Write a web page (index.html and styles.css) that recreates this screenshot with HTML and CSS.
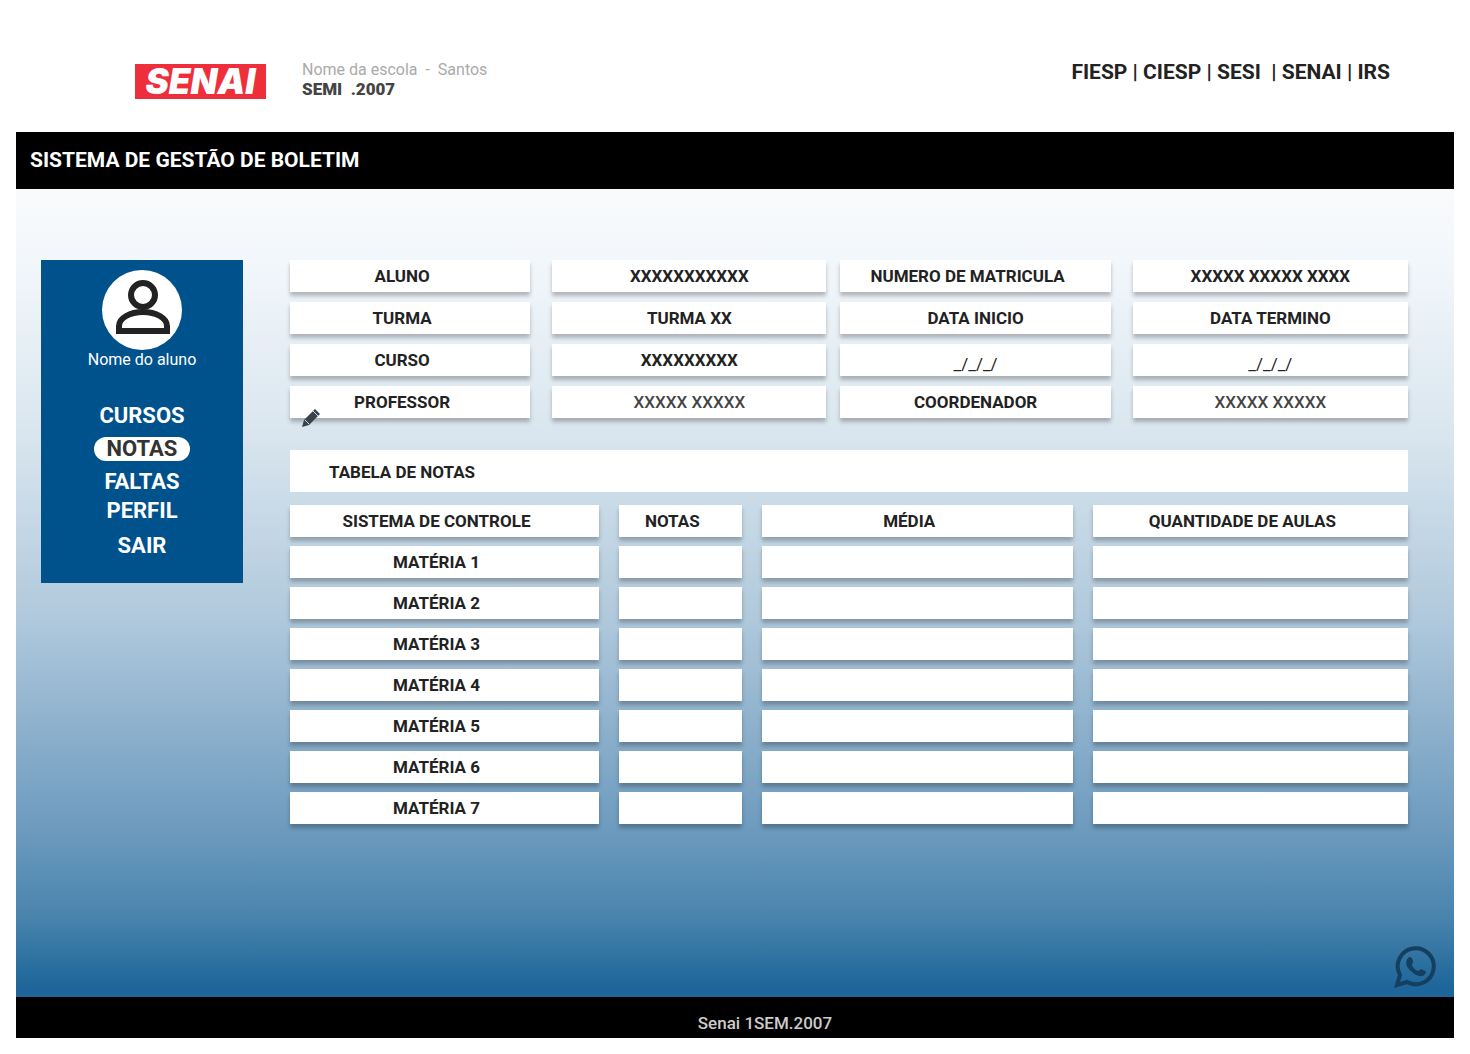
FILE: index.html
```html
<!DOCTYPE html>
<html lang="pt-BR">
<head>
<meta charset="utf-8">
<title>Sistema de Gestão de Boletim</title>
<link rel="stylesheet" href="styles.css">
</head>
<body>
<header class="top">
  <a class="logo" href="#">SENAI</a>
  <p class="school"><span>Nome da escola &nbsp;- &nbsp;Santos</span><strong>SEMI &nbsp;.2007</strong></p>
  <p class="partners">FIESP | CIESP | SESI &nbsp;| SENAI | IRS</p>
</header>
<div class="title-bar"><h1>SISTEMA DE GESTÃO DE BOLETIM</h1></div>
<main class="main">
  <aside class="sidebar">
    <svg class="avatar" viewBox="0 0 80 80" aria-hidden="true">
      <circle cx="40" cy="40" r="40" fill="#fff"/>
      <g fill="none" stroke="#222" stroke-width="6">
        <circle cx="41" cy="25" r="12"/>
        <path d="M17 61v-5c0-8 11-14 24-14s24 6 24 14v5z"/>
      </g>
    </svg>
    <p class="user">Nome do aluno</p>
    <nav class="menu">
      <a href="#">CURSOS</a>
      <a class="active" href="#">NOTAS</a>
      <a href="#">FALTAS</a>
      <a href="#">PERFIL</a>
      <a class="exit" href="#">SAIR</a>
    </nav>
  </aside>
  <section class="content">
    <div class="info">
      <div class="pair left">
        <div class="cell label">ALUNO</div><div class="cell">XXXXXXXXXXX</div>
        <div class="cell label">TURMA</div><div class="cell">TURMA XX</div>
        <div class="cell label">CURSO</div><div class="cell">XXXXXXXXX</div>
        <div class="cell label">PROFESSOR
          <svg class="pencil" viewBox="0 0 20 20" aria-hidden="true"><path d="M1 19l2-7L14 1l5 5L8 17z" fill="#39424a"/><path d="M4 12l4 4M12 3l5 5" stroke="#d5dde3" stroke-width="1"/></svg>
        </div><div class="cell light">XXXXX XXXXX</div>
      </div>
      <div class="pair right">
        <div class="cell label">NUMERO DE MATRICULA</div><div class="cell">XXXXX XXXXX XXXX</div>
        <div class="cell">DATA INICIO</div><div class="cell">DATA TERMINO</div>
        <div class="cell date">_/_/_/</div><div class="cell date">_/_/_/</div>
        <div class="cell">COORDENADOR</div><div class="cell light">XXXXX XXXXX</div>
      </div>
    </div>
    <h2 class="section-title">TABELA DE NOTAS</h2>
    <table class="grades">
      <colgroup><col class="c-subject"><col class="c-grade"><col class="c-average"><col></colgroup>
      <thead>
        <tr><th>SISTEMA DE CONTROLE</th><th>NOTAS</th><th>MÉDIA</th><th>QUANTIDADE DE AULAS</th></tr>
      </thead>
      <tbody>
        <tr><th>MATÉRIA 1</th><td></td><td></td><td></td></tr>
        <tr><th>MATÉRIA 2</th><td></td><td></td><td></td></tr>
        <tr><th>MATÉRIA 3</th><td></td><td></td><td></td></tr>
        <tr><th>MATÉRIA 4</th><td></td><td></td><td></td></tr>
        <tr><th>MATÉRIA 5</th><td></td><td></td><td></td></tr>
        <tr><th>MATÉRIA 6</th><td></td><td></td><td></td></tr>
        <tr><th>MATÉRIA 7</th><td></td><td></td><td></td></tr>
      </tbody>
    </table>
  </section>
  <a class="whatsapp" href="#" aria-label="WhatsApp">
    <svg viewBox="0 0 42 42" aria-hidden="true">
      <path d="M3 39l3-10a18 18 0 1 1 7 7z" fill="none" stroke="#153f5e" stroke-width="4"/>
      <path d="M14 12c2-2 4-1 5 3 1 2-2 3-1 4 1 3 3 5 6 6 2 0 2-3 5-1 3 1 4 2 2 4-3 4-9 2-13-2-5-4-8-9-4-14z" fill="#153f5e"/>
    </svg>
  </a>
</main>
<footer class="footer">Senai 1SEM.2007</footer>
</body>
</html>
```
FILE: styles.css
```css
* { box-sizing: border-box; }

body {
  margin: 0;
  padding: 0 16px 16px;
  min-height: 100vh;
  display: flex;
  flex-direction: column;
  background: #fff;
  color: #222;
  font: 700 16px/20px Roboto, "Liberation Sans", sans-serif;
}

h1, h2, p { margin: 0; }
a { color: inherit; text-decoration: none; }

.top {
  display: flex;
  align-items: flex-start;
  height: 132px;
  padding: 60px 64px 0 119px;
}

.logo {
  width: 131px;
  height: 35px;
  margin-top: 4px;
  background: #ee2e3a;
  color: #fff;
  font: italic 900 35px/35px Inter, Roboto, sans-serif;
  text-align: center;
}

.school { margin-left: 36px; }
.school span, .school strong { display: block; }
.school span { color: #aaa; font-weight: 400; }
.school strong { color: #444; font-size: 17px; line-height: 18px; }

.partners { margin-left: auto; padding-top: 2px; font-size: 21px; }

.title-bar { padding: 16px 14px; background: #000; color: #fff; }
.title-bar h1 { font-size: 21px; line-height: 25px; }

.main {
  position: relative;
  flex: 1;
  display: flex;
  align-items: flex-start;
  gap: 47px;
  padding: 71px 46px 40px 25px;
  background: linear-gradient(#f9fafc 0%, #f2f7fb 9%, #dae6ef 30%, #b0c9dc 53%, #6b99bd 80%, #4984ad 90%, #1d659a 99%);
}

.sidebar {
  display: flex;
  flex-direction: column;
  align-items: center;
  width: 202px;
  padding: 10px 0 25px;
  background: #00528c;
  color: #fff;
}

.avatar { width: 82px; height: 80px; }
.user { font-weight: 400; }

.menu {
  display: flex;
  flex-direction: column;
  align-items: center;
  gap: 5px;
  margin-top: 34px;
  font-size: 22px;
  line-height: 24px;
}
.menu .active {
  width: 96px;
  margin: 4px 0;
  border-radius: 12px;
  background: #fff;
  color: #333;
  text-align: center;
}
.menu .exit { margin-top: 6px; }

.content { flex: 1; }

.info { display: flex; gap: 14px; }
.pair { display: grid; grid-auto-rows: 32px; gap: 10px 22px; }
.left { flex: 536; grid-template-columns: 240fr 274fr; }
.right { flex: 567; grid-template-columns: 270fr 275fr; }

.cell, .grades th, .grades td {
  background: #fff;
  box-shadow: 0 4px 4px rgba(0, 0, 0, .25);
}
.cell {
  position: relative;
  padding-top: 6px;
  font-size: 17px;
  text-align: center;
}
.label { padding-right: 16px; }
.light { font-weight: 500; color: #444; }
.date { padding-top: 10px; font-weight: 400; }

.pencil {
  position: absolute;
  left: 10px;
  bottom: -10px;
  width: 22px;
  height: 20px;
}

.section-title {
  margin-top: 32px;
  padding: 12px 39px 10px;
  background: #fff;
  font-size: 17px;
  line-height: 20px;
}

.grades {
  width: calc(100% + 40px);
  margin: 4px -20px 0;
  table-layout: fixed;
  border-spacing: 20px 9px;
}
.grades th, .grades td { height: 32px; padding: 0 16px 0 0; }
.grades th { font-size: 17px; }
.c-subject { width: 29.2%; }
.c-grade { width: 11.6%; }
.c-average { width: 29.4%; }

.whatsapp {
  position: absolute;
  right: 18px;
  bottom: 9px;
  width: 42px;
  height: 42px;
}
.whatsapp svg { display: block; }

.footer {
  height: 41px;
  padding: 16px 0 0 60px;
  background: #000;
  color: #ccc;
  font-size: 17px;
  font-weight: 500;
  text-align: center;
}
```
